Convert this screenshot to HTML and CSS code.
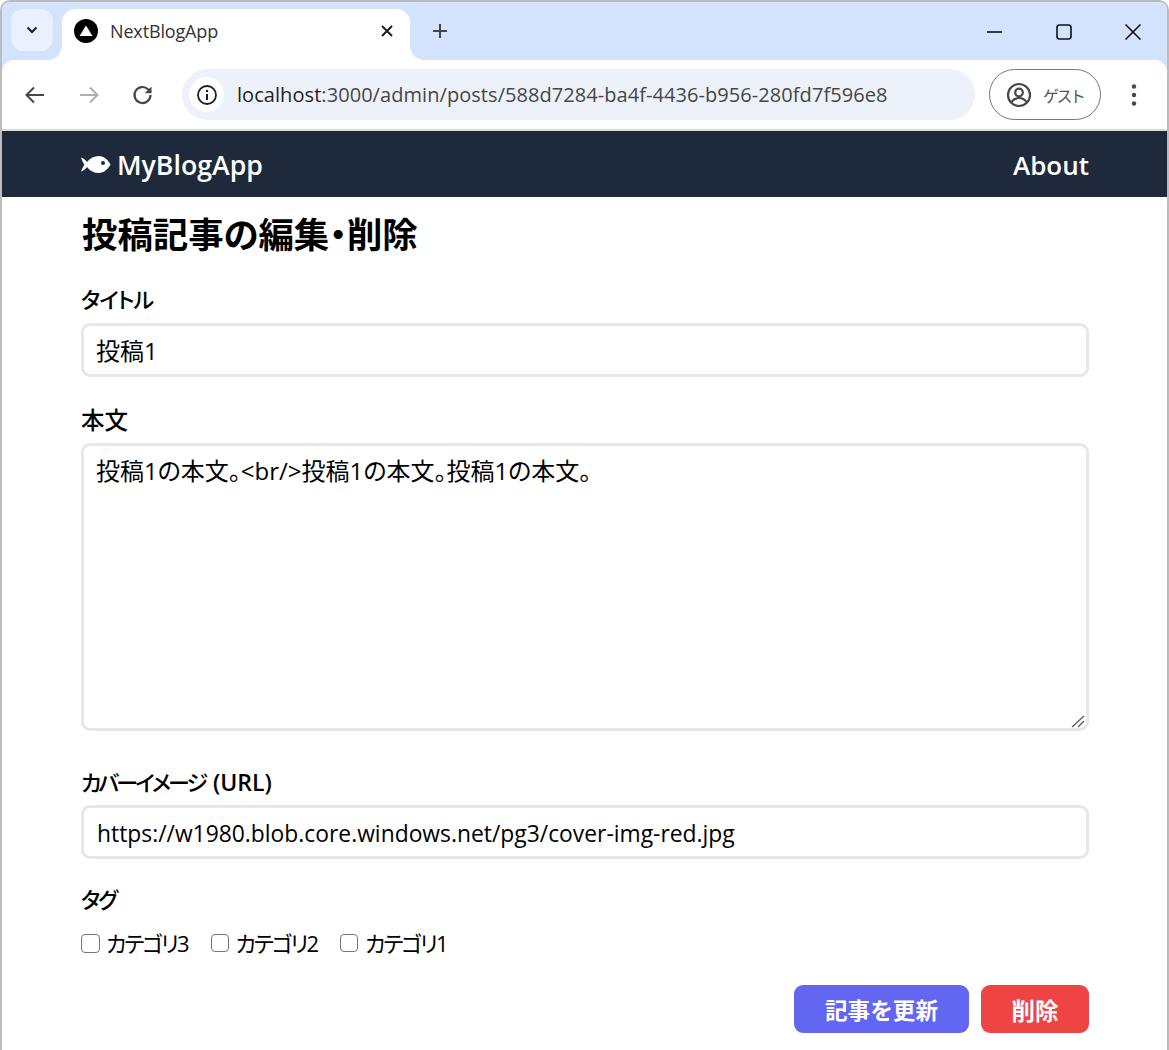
FILE: index.html
```html
<!DOCTYPE html>
<html lang="ja">
<head>
<meta charset="utf-8">
<title>NextBlogApp</title>
<link rel="stylesheet" href="styles.css">
</head>
<body>
<div class="window">
  <div class="tabstrip">
    <div class="tabmenu"><svg width="14" height="14" viewBox="0 0 14 14"><path d="M2.500 4.500L7 9l4.500-4.500" fill="none" stroke="#1f1f1f" stroke-width="2"/></svg></div>
    <div class="tab">
      <svg class="favicon" width="24" height="24" viewBox="0 0 24 24"><circle cx="12" cy="12" r="12" fill="#000"/><path d="M12 6.500l6.500 10.500h-13z" fill="#fff"/></svg>
      <span class="tabtitle">NextBlogApp</span>
      <svg class="tabclose" width="14" height="14" viewBox="0 0 14 14"><path d="M2 2l10 10M12 2L2 12" stroke="#1f1f1f" stroke-width="2"/></svg>
    </div>
    <svg class="newtab" width="18" height="18" viewBox="0 0 18 18"><path d="M9 2v14M2 9h14" stroke="#444" stroke-width="2"/></svg>
    <div class="wincontrols">
      <svg width="16" height="16" viewBox="0 0 16 16"><path d="M0 8h15" stroke="#000" stroke-width="1.600"/></svg>
      <svg width="16" height="16" viewBox="0 0 16 16"><rect x="1" y="1" width="14" height="14" rx="2.500" fill="none" stroke="#111" stroke-width="1.600"/></svg>
      <svg width="16" height="16" viewBox="0 0 16 16"><path d="M.5.5l15 15M15.500.5l-15 15" stroke="#000" stroke-width="1.500"/></svg>
    </div>
  </div>
  <div class="toolbar">
    <svg class="navicon" width="24" height="24" viewBox="0 0 24 24"><path d="M21 12H4M11 4.500L3.500 12l7.500 7.500" fill="none" stroke="#474747" stroke-width="2"/></svg>
    <svg class="navicon" width="24" height="24" viewBox="0 0 24 24"><path d="M3 12h17M13 4.500l7.500 7.500-7.500 7.500" fill="none" stroke="#aeaeae" stroke-width="2"/></svg>
    <svg class="navicon" width="24" height="24" viewBox="0 0 24 24"><path d="M19.500 12a8 8 0 1 1-2.400-5.700L20 9" fill="none" stroke="#474747" stroke-width="2.200"/><path d="M20.500 3.500v6.800h-6.800z" fill="#474747"/></svg>
    <div class="omnibox">
      <span class="siteinfo"><svg width="22" height="22" viewBox="0 0 22 22"><circle cx="11" cy="11" r="9" fill="none" stroke="#1f1f1f" stroke-width="1.800"/><path d="M11 10v6" stroke="#1f1f1f" stroke-width="2"/><circle cx="11" cy="7" r="1.200" fill="#1f1f1f"/></svg></span>
      <span class="url"><span class="host">localhost</span>:3000/admin/posts/588d7284-ba4f-4436-b956-280fd7f596e8</span>
    </div>
    <div class="profile">
      <svg width="26" height="26" viewBox="0 0 26 26"><circle cx="13" cy="13" r="11" fill="none" stroke="#474747" stroke-width="2.200"/><circle cx="13" cy="10.500" r="3.800" fill="none" stroke="#474747" stroke-width="2.200"/><path d="M5.500 20c2-3 4.500-4 7.500-4s5.500 1 7.500 4" fill="none" stroke="#474747" stroke-width="2.200"/></svg>
      <span class="guest">ゲスト</span>
    </div>
    <svg class="kebab" width="6" height="24" viewBox="0 0 6 24"><circle cx="3" cy="3.500" r="2.200" fill="#474747"/><circle cx="3" cy="12" r="2.200" fill="#474747"/><circle cx="3" cy="20.500" r="2.200" fill="#474747"/></svg>
  </div>
  <header class="appnav">
    <div class="brand">
      <svg class="fish" width="30" height="20" viewBox="0 0 30 20"><path d="M0 2.500c2 .5 4 2 6 4.500 3-4 7-6 12-6 5 0 9 4 11.500 8.500-2.500 4.500-6.500 8.500-11.500 8.500-5 0-9-2-12-6-2 2.500-4 4-6 4.500 1-2.500 2-4.500 3.500-7C2 8 1 5 0 2.500z" fill="#fff"/><circle cx="22" cy="8" r="2" fill="#1e293b"/></svg>
      <span>MyBlogApp</span>
    </div>
    <span class="about">About</span>
  </header>
  <main class="content">
    <h1>投稿記事の編集・削除</h1>
    <div class="field field-title">
      <label for="title" class="kana-title">タイトル</label>
      <input id="title" class="box box-cjk box-title" type="text" value="投稿1">
    </div>
    <div class="field field-body">
      <label for="body" class="label-kanji">本文</label>
      <div class="areawrap">
        <textarea id="body" class="box box-cjk box-area">投稿1の本文。&lt;br/&gt;投稿1の本文。投稿1の本文。</textarea>
        <svg class="grip" width="14" height="14" viewBox="0 0 14 14"><path d="M1 13L13 2M7 13l6-6" stroke="#555" stroke-width="1.200" fill="none"/></svg>
      </div>
    </div>
    <div class="field field-cover">
      <label for="cover"><span class="kana-cover">カバーイメージ</span> <span class="label-latin">(URL)</span></label>
      <input id="cover" class="box box-url" type="text" value="https://w1980.blob.core.windows.net/pg3/cover-img-red.jpg">
    </div>
    <div class="tags">
      <div class="taglabel">タグ</div>
      <div class="taglist">
        <label class="tag"><input type="checkbox"><span>カテゴリ3</span></label>
        <label class="tag"><input type="checkbox"><span>カテゴリ2</span></label>
        <label class="tag"><input type="checkbox"><span>カテゴリ1</span></label>
      </div>
    </div>
    <div class="actions">
      <button class="btn btn-update" type="button">記事を更新</button>
      <button class="btn btn-delete" type="button">削除</button>
    </div>
  </main>
</div>
</body>
</html>
```
FILE: styles.css
```css
* { box-sizing: border-box; }
html, body { margin: 0; padding: 0; height: 100%; overflow: hidden; background: #fff; }
body { font-family: "Open Sans", "Noto Sans CJK JP", sans-serif; color: #000; }
.window { height: 1050px; border: 2px solid #bcbcbc; border-bottom: 0; border-radius: 10px 10px 0 0; overflow: hidden; display: flex; flex-direction: column; background: #d3e3fd; }
.tabstrip { height: 58px; background: #d3e3fd; display: flex; align-items: flex-start; padding: 7px 0 0 9px; flex: none; }
.tabmenu { width: 42px; height: 42px; border-radius: 12px; background: #e9f1fe; display: flex; align-items: center; justify-content: center; }
.tab { position: relative; width: 348px; height: 51px; margin-left: 9px; background: #fff; border-radius: 14px 14px 0 0; display: flex; align-items: center; padding: 0 16px 8px 12px; }
.tab::before, .tab::after { content: ""; position: absolute; bottom: 0; width: 14px; height: 14px; }
.tab::before { left: -14px; background: radial-gradient(circle at 0 0, transparent 13.500px, #fff 14px); }
.tab::after { right: -14px; background: radial-gradient(circle at 100% 0, transparent 13.500px, #fff 14px); }
.tabtitle { font-size: 18px; color: #333; margin-left: 12px; flex: 1; font-family: "Open Sans", sans-serif; letter-spacing: -.15px; }
.newtab { margin: 13px 0 0 21px; }
.wincontrols { margin-left: auto; display: flex; gap: 53px; padding: 15px 26px 0 0; }
.toolbar { height: 71px; flex: none; background: #fff; border-bottom: 2px solid #dcdcdc; border-radius: 12px 12px 0 0; display: flex; align-items: center; padding: 0 0 0 21px; }
.navicon { margin-right: 30px; flex: none; }
.navicon:nth-child(3) { margin-right: 28px; }
.omnibox { width: 793px; height: 51px; background: #ecf1fa; border-radius: 26px; display: flex; align-items: center; padding-left: 7px; flex: none; margin-left: -1px; }
.siteinfo { width: 35px; height: 35px; border-radius: 50%; background: #fff; display: flex; align-items: center; justify-content: center; }
.url { margin-left: 13px; font-size: 20px; color: #474747; white-space: nowrap; font-family: "Open Sans", sans-serif; letter-spacing: .06px; }
.host { color: #1f1f1f; }
.profile { margin-left: 14px; width: 112px; height: 51px; border: 1.500px solid #777; border-radius: 26px; display: flex; align-items: center; padding-left: 16px; flex: none; }
.guest { margin-left: 11px; font-size: 16px; color: #555; letter-spacing: -2.600px; }
.kebab { margin-left: 30px; flex: none; }
.appnav { height: 66px; flex: none; background: #1e293b; display: flex; align-items: center; justify-content: space-between; padding: 1px 78px 0 79px; color: #fff; font-size: 26px; font-weight: 600; }
.brand { display: flex; align-items: center; gap: 6px; font-size: 26.700px; }
.fish { margin-top: 0; }
.content { flex: 1; padding: 0 78px 0 79px; background: #fff; }
h1 { margin: 13px 0 0 1px; font-size: 35.400px; line-height: 48px; font-weight: 700; font-feature-settings: "palt"; }
.field label, .taglabel { display: block; font-size: 22px; line-height: 32px; font-weight: 500; font-feature-settings: "palt"; }
.field-title { margin-top: 25px; }
.field-body { margin-top: 27px; }
.field-cover { margin-top: 35px; }
.field label { margin-bottom: 7px; }
.field-title label { margin-bottom: 8px; }
.kana-title { letter-spacing: -1px; }
.label-kanji { font-size: 23.500px !important; }
.kana-cover { letter-spacing: -2.850px; }
.label-latin { font-size: 23px; font-weight: 600; margin-left: 2px; }
.taglabel { letter-spacing: -2px; }
.box { display: block; width: 100%; border: 3px solid #e5e7eb; border-radius: 9px; padding: 9px 12px; font-family: "Open Sans", "Noto Sans CJK JP", sans-serif; font-weight: 400; line-height: 30px; color: #000; background: #fff; outline: 0; margin: 0; }
.box-cjk { font-size: 24px; font-feature-settings: "palt"; }
.box-title { padding-top: 8px; padding-bottom: 10px; }
.box-area { padding-top: 10px; padding-bottom: 8px; }
.box-url { font-size: 22.850px; padding: 10px 12px 8px 13px; }
input.box { height: 54px; }
.areawrap { position: relative; }
textarea.box { height: 288px; resize: none; }
.grip { position: absolute; right: 4px; bottom: 3px; }
.tags { margin-top: 24px; }
.taglist { display: flex; gap: 23px; margin-top: 12px; }
.tag { display: flex; align-items: center; font-size: 22px; line-height: 32px; font-weight: 400; font-feature-settings: "palt"; letter-spacing: -2px; }
.tag input { appearance: none; width: 18px; height: 18px; margin: 0 7px 0 0; border: 1.500px solid #767676; border-radius: 4px; background: #fff; }
.tag:first-child input { width: 19px; height: 19px; margin-right: 6px; }
.actions { display: flex; justify-content: flex-end; gap: 12px; margin-top: 26px; }
.btn { height: 48px; border: 0; border-radius: 9px; padding: 3px 0 0; color: #fff; font-family: "Open Sans", "Noto Sans CJK JP", sans-serif; font-weight: 700; font-size: 22.600px; line-height: 32px; }
.btn-update { width: 175px; background: #6366f1; }
.btn-delete { width: 108px; background: #ef4444; font-size: 23.500px; }
```
